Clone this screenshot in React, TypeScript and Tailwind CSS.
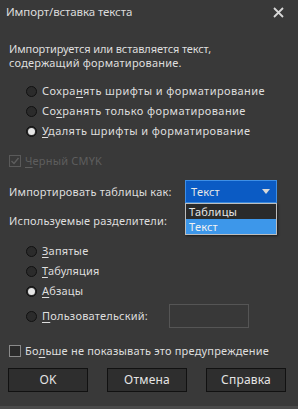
import React from "react";

const F = { fontFamily: '"Noto Sans", "Open Sans", sans-serif' };

function U({ children }: { children: React.ReactNode }) {
  return <span className="underline underline-offset-2">{children}</span>;
}

function Radio({ checked, children }: { checked?: boolean; children: React.ReactNode }) {
  return (
    <div className="flex items-center h-[20px]">
      <div className="w-[11px] h-[11px] rounded-full border border-[#111] bg-[#2b2b2b] flex items-center justify-center shrink-0">
        {checked && <div className="w-[7px] h-[7px] rounded-full bg-[#e6e6e6]" />}
      </div>
      <span className="ml-[5px]">{children}</span>
    </div>
  );
}

function Btn({ children }: { children: React.ReactNode }) {
  return (
    <div className="w-[80px] h-[24px] bg-[#2e2e2e] border border-[#111] flex items-center justify-center text-[#e4e4e4] text-[12px]">
      {children}
    </div>
  );
}

export default function App() {
  return (
    <div style={F} className="w-[298px] h-[409px] bg-[#393939] text-[#dedede] text-[11px] tracking-[0.2px] leading-[14px] flex flex-col relative overflow-hidden">
      <div className="h-[24px] flex items-center justify-between pl-[6px] pr-[14px] text-[#dcdcdc] text-[11.5px] tracking-[-0.1px]">
        <span>Импорт/вставка текста</span>
        <svg width="11" height="11" viewBox="0 0 11 11">
          <path d="M1 1 L10 10 M10 1 L1 10" stroke="#d8d8d8" strokeWidth="1.8" />
        </svg>
      </div>
      <div className="pl-[9px] pt-[18px] leading-[14px]">
        <div className="tracking-[-0.1px]">Импортируется или вставляется текст,</div>
        <div>содержащий форматирование.</div>
      </div>
      <div className="pl-[26px] pt-[11px] flex flex-col tracking-[0.42px]">
        <Radio>Сохра<U>н</U>ять шрифты и форматирование</Radio>
        <Radio>Со<U>х</U>ранять только форматирование</Radio>
        <Radio checked><U>У</U>далять шрифты и форматирование</Radio>
      </div>
      <div className="pl-[9px] pt-[10px] flex items-center text-[#5e5e5e] h-[30px]">
        <div className="w-[12px] h-[12px] border border-[#5a5a5a] flex items-center justify-center">
          <svg width="10" height="10" viewBox="0 0 10 10">
            <path d="M1.5 5 L4 7.5 L8.5 2" stroke="#5e5e5e" strokeWidth="1.4" fill="none" />
          </svg>
        </div>
        <span className="ml-[4px]"><U>Ч</U>ерный CMYK</span>
      </div>
      <div className="pl-[9px] pr-[21px] pt-[9px] flex items-center justify-between relative">
        <span>Импортировать таблицы как:</span>
        <div className="w-[92px] h-[23px] bg-[#0b5bc4] border border-[#3e8fe6] flex items-center justify-between pl-[5px] pr-[6px] text-[#e8e8e8]">
          <span>Текст</span>
          <svg width="8" height="5" viewBox="0 0 8 5">
            <path d="M0 0 L8 0 L4 5 Z" fill="#d8d8d8" />
          </svg>
        </div>
        <div className="absolute left-[185px] top-[32px] w-[92px] border border-[#bdbdbd] bg-[#2a2a2a] shadow-[1px_1px_2px_rgba(0,0,0,0.5)] z-10">
          <div className="h-[15px] pl-[3px] flex items-center text-[#e6e6e6]">Таблицы</div>
          <div className="h-[15px] pl-[3px] flex items-center bg-[#3d97ea] text-[#f2f2f2]">Текст</div>
        </div>
      </div>
      <div className="pl-[9px] pt-[11px]">Используемые разделители:</div>
      <div className="pl-[26px] pt-[13px] flex flex-col">
        <Radio><U>З</U>апятые</Radio>
        <Radio><U>Т</U>абуляция</Radio>
        <Radio checked><U>А</U>бзацы</Radio>
        <div className="flex items-center h-[24px] mt-[3px]">
          <div className="w-[11px] h-[11px] rounded-full border border-[#111] bg-[#2b2b2b] shrink-0" />
          <span className="ml-[5px] w-[127px]"><U>П</U>ользовательский:</span>
          <div className="w-[80px] h-[24px] border border-[#555] bg-[#383838]" />
        </div>
      </div>
      <div className="pl-[9px] pt-[12px] flex items-center h-[26px] mt-[4px]">
        <div className="w-[12px] h-[12px] border border-[#8a8a8a] bg-[#2a2a2a]" />
        <span className="ml-[4px]">Бо<U>л</U>ьше не показывать это предупреждение</span>
      </div>
      <div className="pl-[8px] pt-[10px] flex gap-[19px]">
        <Btn>OK</Btn>
        <Btn>Отмена</Btn>
        <Btn>Справка</Btn>
      </div>
      <div className="absolute left-0 bottom-0 w-full h-[3px] bg-[#4a4a4a]" />
    </div>
  );
}
